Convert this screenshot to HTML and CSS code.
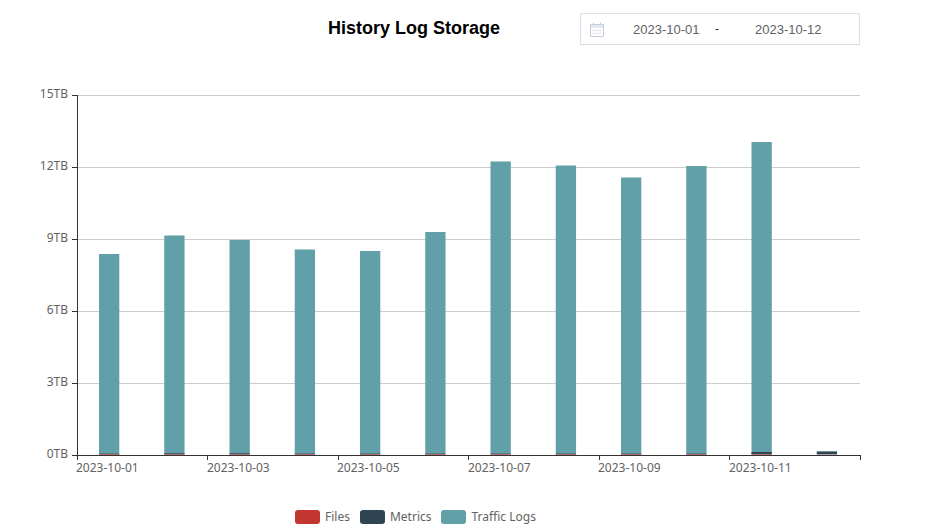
FILE: index.html
```html
<!DOCTYPE html>
<html lang="en">
<head>
<meta charset="utf-8">
<title>History Log Storage</title>
<link rel="stylesheet" href="styles.css">
</head>
<body>
<div class="page">
  <header class="head">
    <h1 class="title">History Log Storage</h1>
    <div class="range">
      <svg class="cal" width="14" height="15" viewBox="0 0 14 15"><path class="cal-band" d="M1 3h12v3H1z"/><path class="cal-line" d="M.5 2.5h13v12H.5zM3.5 .5v2M10.5 .5v2"/><path class="cal-dots" d="M3 8.5h8M3 11.5h8"/></svg>
      <span class="date">2023-10-01</span>
      <span class="dash">-</span>
      <span class="date">2023-10-12</span>
    </div>
  </header>
  <svg class="chart" width="941" height="469" viewBox="0 60 941 469">
    <g class="grid">
      <path d="M77 95.5H860M77 167.5H860M77 239.5H860M77 311.5H860M77 383.5H860"/>
    </g>
    <g class="ylabels">
      <text x="68" y="98">15TB</text>
      <text x="68" y="170">12TB</text>
      <text x="68" y="242">9TB</text>
      <text x="68" y="314">6TB</text>
      <text x="68" y="386">3TB</text>
      <text x="68" y="458">0TB</text>
    </g>
    <g class="traffic">
      <rect x="99" y="254" width="20.3" height="200.4"/>
      <rect x="164.25" y="235.5" width="20.3" height="218.9"/>
      <rect x="229.5" y="240" width="20.3" height="214.4"/>
      <rect x="294.75" y="249.5" width="20.3" height="204.9"/>
      <rect x="360" y="251" width="20.3" height="203.4"/>
      <rect x="425.25" y="232" width="20.3" height="222.4"/>
      <rect x="490.5" y="161.5" width="20.3" height="292.9"/>
      <rect x="555.75" y="165.5" width="20.3" height="288.9"/>
      <rect x="621" y="177.5" width="20.3" height="276.9"/>
      <rect x="686.25" y="166" width="20.3" height="288.4"/>
      <rect x="751.5" y="142" width="20.3" height="312.4"/>
    </g>
    <g class="metrics">
      <rect x="99" y="453.7" width="20.3" height=".5"/>
      <rect x="164.25" y="453.3" width="20.3" height=".8"/>
      <rect x="229.5" y="453.3" width="20.3" height=".8"/>
      <rect x="294.75" y="453.7" width="20.3" height=".5"/>
      <rect x="360" y="453.7" width="20.3" height=".5"/>
      <rect x="425.25" y="453.7" width="20.3" height=".5"/>
      <rect x="490.5" y="453.7" width="20.3" height=".5"/>
      <rect x="555.75" y="453.7" width="20.3" height=".5"/>
      <rect x="621" y="453.7" width="20.3" height=".5"/>
      <rect x="686.25" y="453.7" width="20.3" height=".5"/>
      <rect x="751.5" y="452" width="20.3" height="2"/>
      <rect x="816.75" y="451.4" width="20.3" height="3"/>
    </g>
    <g class="files">
      <rect x="99" y="454.4" width="20.3" height=".6"/>
      <rect x="164.25" y="454.4" width="20.3" height=".6"/>
      <rect x="229.5" y="454.4" width="20.3" height=".6"/>
      <rect x="294.75" y="454.4" width="20.3" height=".6"/>
      <rect x="360" y="454.4" width="20.3" height=".6"/>
      <rect x="425.25" y="454.4" width="20.3" height=".6"/>
      <rect x="490.5" y="454.4" width="20.3" height=".6"/>
      <rect x="555.75" y="454.4" width="20.3" height=".6"/>
      <rect x="621" y="454.4" width="20.3" height=".6"/>
      <rect x="686.25" y="454.4" width="20.3" height=".6"/>
      <rect x="751.5" y="454.4" width="20.3" height=".6"/>
      <rect x="816.75" y="454.4" width="20.3" height=".6" class="files-faint"/>
    </g>
    <g class="axis">
      <path d="M77.5 95V460M72 95.5H77M72 167.5H77M72 239.5H77M72 311.5H77M72 383.5H77M72 455.5H77M72 455.5H860.5M207.5 455V460M338.5 455V460M468.5 455V460M599.5 455V460M729.5 455V460M860.5 455V460"/>
    </g>
    <g class="xlabels">
      <text x="76" y="472">2023-10-01</text>
      <text x="207" y="472">2023-10-03</text>
      <text x="337" y="472">2023-10-05</text>
      <text x="468" y="472">2023-10-07</text>
      <text x="598" y="472">2023-10-09</text>
      <text x="729" y="472">2023-10-11</text>
    </g>
  </svg>
  <div class="legend">
    <span class="item"><i class="swatch s-files"></i>Files</span>
    <span class="item"><i class="swatch s-metrics"></i>Metrics</span>
    <span class="item"><i class="swatch s-traffic"></i>Traffic Logs</span>
  </div>
</div>
</body>
</html>
```
FILE: styles.css
```css
* { box-sizing: border-box; }
html, body { margin: 0; padding: 0; background: #fff; overflow: hidden; }
.page { width: 941px; height: 529px; position: relative; }
.head { height: 60px; display: flex; align-items: flex-start; padding: 13px 81px 0 328px; justify-content: space-between; }
.title { margin: 4px 0 0; font: bold 18px/22px "Liberation Sans", Arial, sans-serif; color: #000; }
.range { width: 280px; height: 32px; border: 1px solid #dcdfe6; display: flex; align-items: center; padding-left: 9px; font: 13px "Liberation Sans", Arial, sans-serif; color: #606266; }
.cal { margin-right: 29px; }
.cal-line { fill: none; stroke: #c5cede; stroke-width: 1; }
.cal-band { fill: #e4e8f0; }
.cal-dots { fill: none; stroke: #d3dae6; stroke-width: 1; stroke-dasharray: 2 1; }
.date { width: 67px; }
.dash { margin: 0 36px 0 15px; color: #303133; font-size: 12px; }
.chart { display: block; }
.chart text { font-family: "Noto Sans", sans-serif; font-size: 12px; fill: #626262; }
.ylabels text { text-anchor: end; }
.grid path { stroke: #ccc; fill: none; }
.axis path { stroke: #333; fill: none; }
.traffic rect { fill: #61a0a8; }
.metrics rect { fill: #2f4554; }
.files rect { fill: #c23531; }
.files .files-faint { opacity: .25; }
.legend { position: absolute; left: 295px; top: 508px; display: flex; gap: 10px; font: 12px/18px "Noto Sans", sans-serif; color: #626262; }
.item { display: flex; align-items: center; gap: 5px; }
.swatch { width: 25px; height: 14px; border-radius: 3px; display: block; }
.s-files { background: #c23531; }
.s-metrics { background: #2f4554; }
.s-traffic { background: #61a0a8; }
```
